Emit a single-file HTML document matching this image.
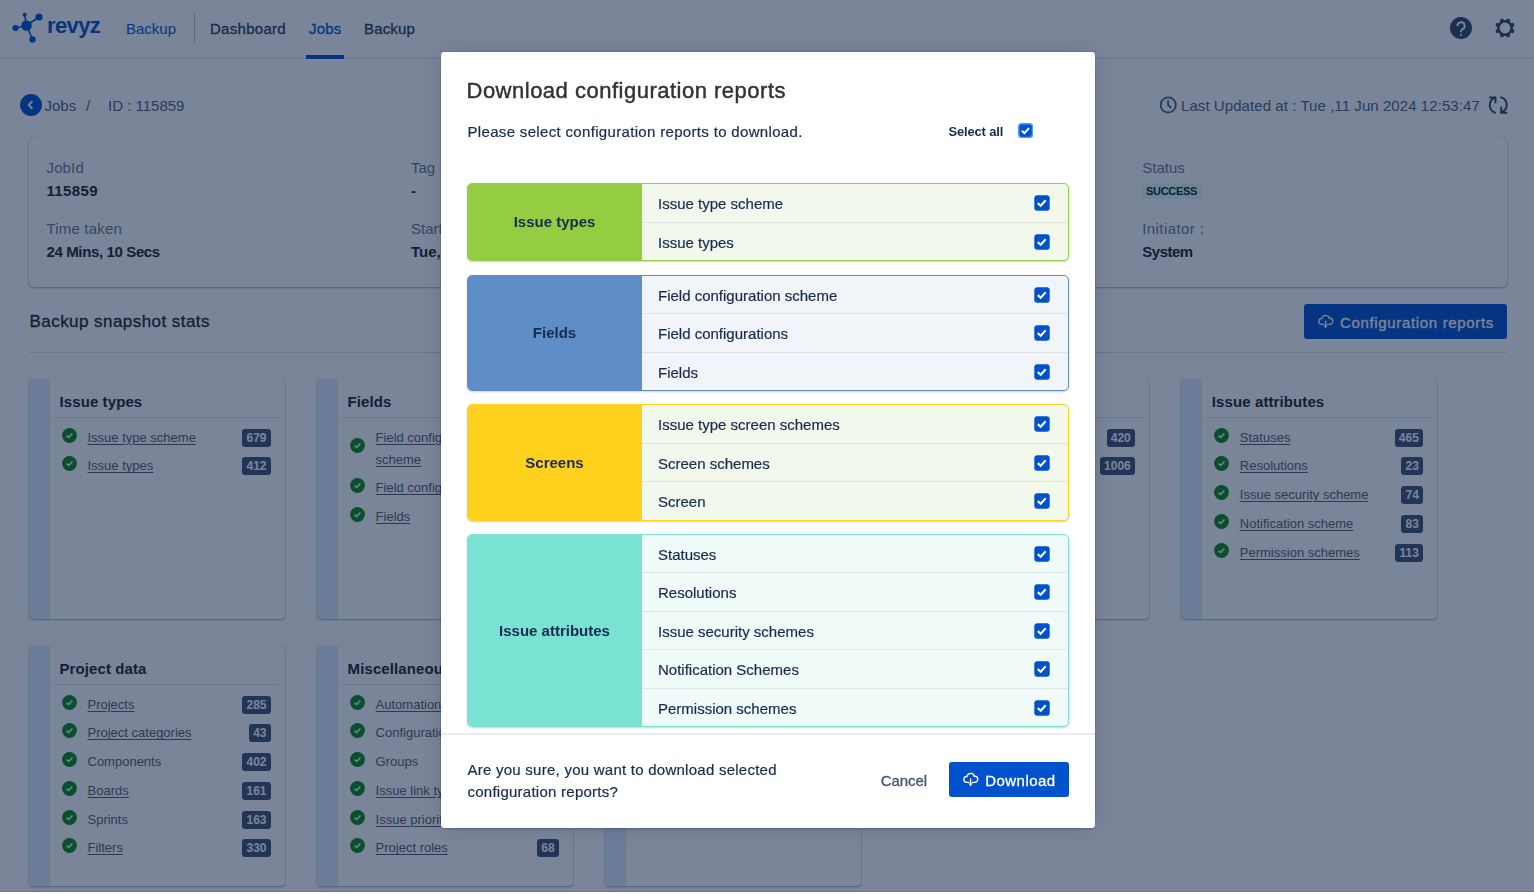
<!DOCTYPE html>
<html><head><meta charset="utf-8">
<style>
*{box-sizing:border-box;margin:0;padding:0}
html,body{width:1534px;height:894px;overflow:hidden;background:#fff;font-family:"Liberation Sans",sans-serif;color:#172B4D}
.t{position:absolute;line-height:1;white-space:nowrap}
.m{-webkit-text-stroke:0.3px currentColor}
.a{position:absolute}
#page{position:absolute;left:0;top:0;width:1534px;height:892px;background:#fff;overflow:hidden}
#nav{position:absolute;left:0;top:0;width:1534px;height:59px;border-bottom:1px solid #DFE1E6;background:#fff}
.card{position:absolute;width:256.5px;height:240.8px;background:#fff;border-radius:4px;box-shadow:0 1px 2px rgba(9,30,66,.35),0 0 1px rgba(9,30,66,.4);overflow:hidden}
.card .stripe{position:absolute;left:0;top:0;width:21px;height:100%;background:#DEEBFF}
.card .ttl{position:absolute;left:31px;top:15px;font-size:15px;font-weight:700;letter-spacing:0.1px;line-height:1;white-space:nowrap;color:#222}
.card .hr{position:absolute;left:25px;right:6px;top:38px;height:1px;background:#DFE1E6}
.it{position:absolute;left:0;width:257px;height:20px}
.it .ck{position:absolute;left:33.2px;top:0;width:15px;height:15px}
.it .tx{position:absolute;left:59px;top:3px;font-size:13px;line-height:1;white-space:nowrap;color:#5b5b5f}
.it .tx.u{text-decoration:underline;text-underline-offset:1.8px;text-decoration-thickness:1px}
.it .bd{position:absolute;right:15px;top:0px;height:18px;padding:0 4px;border-radius:3px;background:#42526E;color:#fff;font-size:12px;font-weight:700;line-height:18px}
#overlay{position:absolute;left:0;top:0;width:1534px;height:892px;background:rgba(9,30,66,.54)}
#modal{will-change:transform;position:absolute;left:441px;top:52px;width:654px;height:776px;background:#fff;border-radius:3px;box-shadow:0 0 0 1px rgba(9,30,66,.08),0 2px 1px rgba(9,30,66,.08),0 0 20px -6px rgba(9,30,66,.31)}
.sec{position:absolute;left:26px;width:602px;border-radius:5px;overflow:hidden;border:1px solid;box-shadow:0 1px 2px rgba(9,30,66,.2)}
.sec .lab{position:absolute;left:-1px;top:-1px;bottom:-1px;width:175px;display:flex;align-items:center;justify-content:center;font-size:15px;font-weight:700;color:#172B4D}
.sec .rows{position:absolute;left:174px;top:0;right:0;bottom:0}
.row{position:absolute;left:0;right:0;border-top:1px solid rgba(9,30,66,.08)}
.row:first-child{border-top:none}
.row .tx{position:absolute;left:16px;font-size:15px;line-height:1;white-space:nowrap;color:#172B4D;-webkit-text-stroke:0.2px #172B4D}
.row .cb{position:absolute;left:392px;width:16px;height:16px}
</style></head><body>
<div id="page">
 <div id="nav">
  <svg class="a" style="left:10px;top:11px" width="36" height="35" viewBox="0 0 36 35">
   <g fill="#0052CC" stroke="#0052CC" stroke-width="1.6">
    <line x1="16.5" y1="14.5" x2="14.7" y2="3.8"/><line x1="16.5" y1="14.5" x2="29" y2="6"/>
    <line x1="16.5" y1="14.5" x2="5.5" y2="17"/><line x1="16.5" y1="14.5" x2="22.5" y2="28.5"/>
   </g>
   <g fill="#0052CC">
    <circle cx="16.5" cy="14.5" r="5.3"/><circle cx="14.7" cy="3.8" r="2"/><circle cx="29" cy="6" r="3.6"/>
    <circle cx="5.5" cy="17" r="3.1"/><circle cx="22.5" cy="28.5" r="3.2"/>
   </g>
  </svg>
  <div class="t" style="left:47px;top:15.3px;font-size:22px;font-weight:700;color:#0052CC;letter-spacing:-0.6px">revyz</div>
  <div class="t" style="left:126px;top:21.3px;font-size:15px;color:#0052CC">Backup</div>
  <div class="a" style="left:194px;top:13px;width:1px;height:30px;background:#C1C7D0"></div>
  <div class="t m" style="left:210px;top:21.3px;font-size:15px;color:#253858;letter-spacing:0.29px">Dashboard</div>
  <div class="t m" style="left:309px;top:21.3px;font-size:15px;color:#0052CC;letter-spacing:0.23px">Jobs</div>
  <div class="t m" style="left:364px;top:21.3px;font-size:15px;color:#253858;letter-spacing:0.16px">Backup</div>
  <div class="a" style="left:306px;top:55px;width:38px;height:4px;background:#0052CC"></div>
  <svg class="a" style="left:1450px;top:17px" width="22" height="22" viewBox="0 0 22 22">
   <circle cx="11" cy="11" r="11" fill="#344563"/>
   <path d="M7.5 9.2 A3.6 3.6 0 1 1 12.3 12.3 Q11 12.9 11 14.2 V15.3" fill="none" stroke="#fff" stroke-width="1.8"/>
   <rect x="10.1" y="16.9" width="1.8" height="1.8" fill="#fff"/>
  </svg>
  <svg class="a" style="left:1494.6px;top:17.5px" width="20" height="20" viewBox="-10 -10 20 20">
   <g fill="#344563"><circle cx="0" cy="0" r="6.65" fill="none" stroke="#344563" stroke-width="2.5"/><rect x="-1.9" y="-9.7" width="3.8" height="3.6" rx="0.9" transform="rotate(22.5)"/><rect x="-1.9" y="-9.7" width="3.8" height="3.6" rx="0.9" transform="rotate(67.5)"/><rect x="-1.9" y="-9.7" width="3.8" height="3.6" rx="0.9" transform="rotate(112.5)"/><rect x="-1.9" y="-9.7" width="3.8" height="3.6" rx="0.9" transform="rotate(157.5)"/><rect x="-1.9" y="-9.7" width="3.8" height="3.6" rx="0.9" transform="rotate(202.5)"/><rect x="-1.9" y="-9.7" width="3.8" height="3.6" rx="0.9" transform="rotate(247.5)"/><rect x="-1.9" y="-9.7" width="3.8" height="3.6" rx="0.9" transform="rotate(292.5)"/><rect x="-1.9" y="-9.7" width="3.8" height="3.6" rx="0.9" transform="rotate(337.5)"/></g>
  </svg>
 </div>

 <!-- breadcrumb -->
 <svg class="a" style="left:20px;top:94px" width="22" height="22" viewBox="0 0 22 22">
  <circle cx="11" cy="11" r="11" fill="#0052CC"/>
  <path d="M12.4 7.2 L8.8 11 L12.4 14.8" fill="none" stroke="#fff" stroke-width="1.9"/>
 </svg>
 <div class="t" style="left:44.5px;top:98.3px;font-size:15px;color:#505F79">Jobs</div>
 <div class="t" style="left:86px;top:98.3px;font-size:15px;color:#505F79">/</div>
 <div class="t" style="left:108px;top:98.3px;font-size:15px;color:#505F79">ID : 115859</div>
 <svg class="a" style="left:1159px;top:96px" width="18" height="18" viewBox="0 0 18 18">
  <circle cx="9.2" cy="8.9" r="7.6" fill="none" stroke="#505F79" stroke-width="1.8"/>
  <path d="M9.1 4.6 V8.9 L11.7 11.7" fill="none" stroke="#505F79" stroke-width="1.8" stroke-linecap="round"/>
 </svg>
 <div class="t" style="left:1181px;top:98.3px;font-size:15px;color:#505F79;letter-spacing:0.07px">Last Updated at : Tue ,11 Jun 2024 12:53:47</div>
 <svg class="a" style="left:1484px;top:92px" width="28" height="26" viewBox="0 0 28 26">
  <g fill="none" stroke="#344563" stroke-width="2" stroke-linecap="round" stroke-linejoin="round">
   <path d="M11 20.6 A7.9 7.9 0 0 1 10.8 5.8"/>
   <path d="M6 5.4 H11.5 V10.4"/>
   <path d="M17.2 5.4 A7.9 7.9 0 0 1 17.3 20.4"/>
   <path d="M17.2 15.6 V20.8 H22.4"/>
  </g>
 </svg>

 <!-- job card -->
 <div class="a" style="left:28.5px;top:137.5px;width:1478.5px;height:149px;background:#fff;border-radius:5px;box-shadow:0 1px 2px rgba(9,30,66,.35),0 0 1px rgba(9,30,66,.4)"></div>
 <div class="t" style="left:46.5px;top:160.1px;font-size:15px;color:#6B778C;letter-spacing:0.14px">JobId</div>
 <div class="t" style="left:46.5px;top:182.9px;font-size:15px;font-weight:700;color:#222;letter-spacing:0.36px">115859</div>
 <div class="t" style="left:46.5px;top:220.9px;font-size:15px;color:#6B778C;letter-spacing:0.18px">Time taken</div>
 <div class="t" style="left:46.5px;top:244.1px;font-size:15px;font-weight:700;color:#222;letter-spacing:-0.37px">24 Mins, 10 Secs</div>
 <div class="t" style="left:411px;top:160.1px;font-size:15px;color:#6B778C">Tag</div>
 <div class="t" style="left:411px;top:182.9px;font-size:15px;font-weight:700;color:#222">-</div>
 <div class="t" style="left:411px;top:220.9px;font-size:15px;color:#6B778C">Started at</div>
 <div class="t" style="left:411px;top:244.1px;font-size:15px;font-weight:700;color:#222">Tue, 11 Jun 2024 12:29:37</div>
 <div class="t" style="left:1142.3px;top:160.1px;font-size:15px;color:#6B778C">Status</div>
 <div class="a" style="left:1142.3px;top:183.3px;width:60.6px;height:16px;border-radius:3px;background:#E3FCEF"></div>
 <div class="t" style="left:1146px;top:186.3px;font-size:11px;font-weight:700;color:#091E42;letter-spacing:-0.3px">SUCCESS</div>
 <div class="t" style="left:1142.3px;top:220.9px;font-size:15px;color:#6B778C;letter-spacing:0.4px">Initiator :</div>
 <div class="t" style="left:1142.3px;top:244.1px;font-size:15px;font-weight:700;color:#222;letter-spacing:-0.5px">System</div>

 <!-- section header -->
 <div class="t m" style="left:29.5px;top:313.4px;font-size:17px;color:#222;letter-spacing:0.45px">Backup snapshot stats</div>
 <div class="a" style="left:1304px;top:304px;width:203px;height:35px;border-radius:3px;background:#0052CC"></div>
 <svg class="a" style="left:1313px;top:310px" width="26" height="24" viewBox="0 0 26 24"><g fill="none" stroke="#fff" stroke-width="1.3"><path d="M11.3 14.3 H8.6 A2.9 2.9 0 0 1 8.9 8.5 A3.8 3.8 0 0 1 16.3 8.3 A3 3 0 0 1 17.2 14.3 H14"/><path d="M12.6 10.5 V16"/></g><path d="M10.5 15.3 H14.7 L12.6 18.5 Z" fill="#fff"/></svg>
 <div class="t m" style="left:1340px;top:315.3px;font-size:15px;color:#fff;letter-spacing:0.66px">Configuration reports</div>
 <div class="a" style="left:28.5px;top:352px;width:1478.5px;height:1px;background:#DFE1E6"></div>

 <div id="cards"><div class="card" style="left:28.5px;top:378.5px"><div class="stripe"></div><div class="ttl">Issue types</div><div class="hr"></div><div class="it" style="top:50px;height:22px"><svg class="ck" style="top:-1px" viewBox="0 0 15 15"><circle cx="7.5" cy="7.5" r="7.4" fill="#0a8a14"/><path d="M4.6 7.6 L6.6 9.5 L10.4 5.6" fill="none" stroke="#fff" stroke-width="1.5"/></svg><div class="tx u" style="line-height:22px;top:-2px;white-space:normal;width:150px">Issue type scheme</div><div class="bd" style="right:15px">679</div></div><div class="it" style="top:78.75px;height:22px"><svg class="ck" style="top:-1px" viewBox="0 0 15 15"><circle cx="7.5" cy="7.5" r="7.4" fill="#0a8a14"/><path d="M4.6 7.6 L6.6 9.5 L10.4 5.6" fill="none" stroke="#fff" stroke-width="1.5"/></svg><div class="tx u" style="line-height:22px;top:-2px;white-space:normal;width:150px">Issue types</div><div class="bd" style="right:15px">412</div></div></div><div class="card" style="left:316.58px;top:378.5px"><div class="stripe"></div><div class="ttl">Fields</div><div class="hr"></div><div class="it" style="top:50px;height:44px"><svg class="ck" style="top:9px" viewBox="0 0 15 15"><circle cx="7.5" cy="7.5" r="7.4" fill="#0a8a14"/><path d="M4.6 7.6 L6.6 9.5 L10.4 5.6" fill="none" stroke="#fff" stroke-width="1.5"/></svg><div class="tx u" style="line-height:22px;top:-2px;white-space:normal;width:150px">Field configuration scheme</div><div class="bd" style="right:15px">420</div></div><div class="it" style="top:100.75px;height:22px"><svg class="ck" style="top:-1px" viewBox="0 0 15 15"><circle cx="7.5" cy="7.5" r="7.4" fill="#0a8a14"/><path d="M4.6 7.6 L6.6 9.5 L10.4 5.6" fill="none" stroke="#fff" stroke-width="1.5"/></svg><div class="tx u" style="line-height:22px;top:-2px;white-space:normal;width:150px">Field configurations</div><div class="bd" style="right:15px">1006</div></div><div class="it" style="top:129.5px;height:22px"><svg class="ck" style="top:-1px" viewBox="0 0 15 15"><circle cx="7.5" cy="7.5" r="7.4" fill="#0a8a14"/><path d="M4.6 7.6 L6.6 9.5 L10.4 5.6" fill="none" stroke="#fff" stroke-width="1.5"/></svg><div class="tx u" style="line-height:22px;top:-2px;white-space:normal;width:150px">Fields</div><div class="bd" style="right:15px">1</div></div></div><div class="card" style="left:604.66px;top:378.5px"><div class="stripe"></div><div class="ttl">Screens</div><div class="hr"></div><div class="it" style="top:50px;height:22px"><svg class="ck" style="top:-1px" viewBox="0 0 15 15"><circle cx="7.5" cy="7.5" r="7.4" fill="#0a8a14"/><path d="M4.6 7.6 L6.6 9.5 L10.4 5.6" fill="none" stroke="#fff" stroke-width="1.5"/></svg><div class="tx u" style="line-height:22px;top:-2px;white-space:normal;width:150px">Issue type screen schemes</div><div class="bd" style="right:15px">1</div></div><div class="it" style="top:78.75px;height:22px"><svg class="ck" style="top:-1px" viewBox="0 0 15 15"><circle cx="7.5" cy="7.5" r="7.4" fill="#0a8a14"/><path d="M4.6 7.6 L6.6 9.5 L10.4 5.6" fill="none" stroke="#fff" stroke-width="1.5"/></svg><div class="tx u" style="line-height:22px;top:-2px;white-space:normal;width:150px">Screen schemes</div><div class="bd" style="right:15px">1</div></div><div class="it" style="top:107.5px;height:22px"><svg class="ck" style="top:-1px" viewBox="0 0 15 15"><circle cx="7.5" cy="7.5" r="7.4" fill="#0a8a14"/><path d="M4.6 7.6 L6.6 9.5 L10.4 5.6" fill="none" stroke="#fff" stroke-width="1.5"/></svg><div class="tx u" style="line-height:22px;top:-2px;white-space:normal;width:150px">Screens</div><div class="bd" style="right:15px">1</div></div></div><div class="card" style="left:892.74px;top:378.5px"><div class="stripe"></div><div class="ttl">Workflows</div><div class="hr"></div><div class="it" style="top:50px;height:22px"><svg class="ck" style="top:-1px" viewBox="0 0 15 15"><circle cx="7.5" cy="7.5" r="7.4" fill="#0a8a14"/><path d="M4.6 7.6 L6.6 9.5 L10.4 5.6" fill="none" stroke="#fff" stroke-width="1.5"/></svg><div class="tx u" style="line-height:22px;top:-2px;white-space:normal;width:150px">Workflow schemes</div><div class="bd" style="right:15px">420</div></div><div class="it" style="top:78.75px;height:22px"><svg class="ck" style="top:-1px" viewBox="0 0 15 15"><circle cx="7.5" cy="7.5" r="7.4" fill="#0a8a14"/><path d="M4.6 7.6 L6.6 9.5 L10.4 5.6" fill="none" stroke="#fff" stroke-width="1.5"/></svg><div class="tx u" style="line-height:22px;top:-2px;white-space:normal;width:150px">Workflows</div><div class="bd" style="right:15px">1006</div></div></div><div class="card" style="left:1180.82px;top:378.5px"><div class="stripe"></div><div class="ttl">Issue attributes</div><div class="hr"></div><div class="it" style="top:50px;height:22px"><svg class="ck" style="top:-1px" viewBox="0 0 15 15"><circle cx="7.5" cy="7.5" r="7.4" fill="#0a8a14"/><path d="M4.6 7.6 L6.6 9.5 L10.4 5.6" fill="none" stroke="#fff" stroke-width="1.5"/></svg><div class="tx u" style="line-height:22px;top:-2px;white-space:normal;width:150px">Statuses</div><div class="bd" style="right:15px">465</div></div><div class="it" style="top:78.75px;height:22px"><svg class="ck" style="top:-1px" viewBox="0 0 15 15"><circle cx="7.5" cy="7.5" r="7.4" fill="#0a8a14"/><path d="M4.6 7.6 L6.6 9.5 L10.4 5.6" fill="none" stroke="#fff" stroke-width="1.5"/></svg><div class="tx u" style="line-height:22px;top:-2px;white-space:normal;width:150px">Resolutions</div><div class="bd" style="right:15px">23</div></div><div class="it" style="top:107.5px;height:22px"><svg class="ck" style="top:-1px" viewBox="0 0 15 15"><circle cx="7.5" cy="7.5" r="7.4" fill="#0a8a14"/><path d="M4.6 7.6 L6.6 9.5 L10.4 5.6" fill="none" stroke="#fff" stroke-width="1.5"/></svg><div class="tx u" style="line-height:22px;top:-2px;white-space:normal;width:150px">Issue security scheme</div><div class="bd" style="right:15px">74</div></div><div class="it" style="top:136.25px;height:22px"><svg class="ck" style="top:-1px" viewBox="0 0 15 15"><circle cx="7.5" cy="7.5" r="7.4" fill="#0a8a14"/><path d="M4.6 7.6 L6.6 9.5 L10.4 5.6" fill="none" stroke="#fff" stroke-width="1.5"/></svg><div class="tx u" style="line-height:22px;top:-2px;white-space:normal;width:150px">Notification scheme</div><div class="bd" style="right:15px">83</div></div><div class="it" style="top:165.0px;height:22px"><svg class="ck" style="top:-1px" viewBox="0 0 15 15"><circle cx="7.5" cy="7.5" r="7.4" fill="#0a8a14"/><path d="M4.6 7.6 L6.6 9.5 L10.4 5.6" fill="none" stroke="#fff" stroke-width="1.5"/></svg><div class="tx u" style="line-height:22px;top:-2px;white-space:normal;width:150px">Permission schemes</div><div class="bd" style="right:15px">113</div></div></div><div class="card" style="left:28.5px;top:645.5px"><div class="stripe"></div><div class="ttl">Project data</div><div class="hr"></div><div class="it" style="top:50px;height:22px"><svg class="ck" style="top:-1px" viewBox="0 0 15 15"><circle cx="7.5" cy="7.5" r="7.4" fill="#0a8a14"/><path d="M4.6 7.6 L6.6 9.5 L10.4 5.6" fill="none" stroke="#fff" stroke-width="1.5"/></svg><div class="tx u" style="line-height:22px;top:-2px;white-space:normal;width:150px">Projects</div><div class="bd" style="right:15px">285</div></div><div class="it" style="top:78.75px;height:22px"><svg class="ck" style="top:-1px" viewBox="0 0 15 15"><circle cx="7.5" cy="7.5" r="7.4" fill="#0a8a14"/><path d="M4.6 7.6 L6.6 9.5 L10.4 5.6" fill="none" stroke="#fff" stroke-width="1.5"/></svg><div class="tx u" style="line-height:22px;top:-2px;white-space:normal;width:150px">Project categories</div><div class="bd" style="right:15px">43</div></div><div class="it" style="top:107.5px;height:22px"><svg class="ck" style="top:-1px" viewBox="0 0 15 15"><circle cx="7.5" cy="7.5" r="7.4" fill="#0a8a14"/><path d="M4.6 7.6 L6.6 9.5 L10.4 5.6" fill="none" stroke="#fff" stroke-width="1.5"/></svg><div class="tx" style="line-height:22px;top:-2px;white-space:normal;width:150px">Components</div><div class="bd" style="right:15px">402</div></div><div class="it" style="top:136.25px;height:22px"><svg class="ck" style="top:-1px" viewBox="0 0 15 15"><circle cx="7.5" cy="7.5" r="7.4" fill="#0a8a14"/><path d="M4.6 7.6 L6.6 9.5 L10.4 5.6" fill="none" stroke="#fff" stroke-width="1.5"/></svg><div class="tx u" style="line-height:22px;top:-2px;white-space:normal;width:150px">Boards</div><div class="bd" style="right:15px">161</div></div><div class="it" style="top:165.0px;height:22px"><svg class="ck" style="top:-1px" viewBox="0 0 15 15"><circle cx="7.5" cy="7.5" r="7.4" fill="#0a8a14"/><path d="M4.6 7.6 L6.6 9.5 L10.4 5.6" fill="none" stroke="#fff" stroke-width="1.5"/></svg><div class="tx" style="line-height:22px;top:-2px;white-space:normal;width:150px">Sprints</div><div class="bd" style="right:15px">163</div></div><div class="it" style="top:193.75px;height:22px"><svg class="ck" style="top:-1px" viewBox="0 0 15 15"><circle cx="7.5" cy="7.5" r="7.4" fill="#0a8a14"/><path d="M4.6 7.6 L6.6 9.5 L10.4 5.6" fill="none" stroke="#fff" stroke-width="1.5"/></svg><div class="tx u" style="line-height:22px;top:-2px;white-space:normal;width:150px">Filters</div><div class="bd" style="right:15px">330</div></div></div><div class="card" style="left:316.58px;top:645.5px"><div class="stripe"></div><div class="ttl">Miscellaneous</div><div class="hr"></div><div class="it" style="top:50px;height:22px"><svg class="ck" style="top:-1px" viewBox="0 0 15 15"><circle cx="7.5" cy="7.5" r="7.4" fill="#0a8a14"/><path d="M4.6 7.6 L6.6 9.5 L10.4 5.6" fill="none" stroke="#fff" stroke-width="1.5"/></svg><div class="tx u" style="line-height:22px;top:-2px;white-space:normal;width:150px">Automation rules</div></div><div class="it" style="top:78.75px;height:22px"><svg class="ck" style="top:-1px" viewBox="0 0 15 15"><circle cx="7.5" cy="7.5" r="7.4" fill="#0a8a14"/><path d="M4.6 7.6 L6.6 9.5 L10.4 5.6" fill="none" stroke="#fff" stroke-width="1.5"/></svg><div class="tx" style="line-height:22px;top:-2px;white-space:normal;width:150px">Configuration</div></div><div class="it" style="top:107.5px;height:22px"><svg class="ck" style="top:-1px" viewBox="0 0 15 15"><circle cx="7.5" cy="7.5" r="7.4" fill="#0a8a14"/><path d="M4.6 7.6 L6.6 9.5 L10.4 5.6" fill="none" stroke="#fff" stroke-width="1.5"/></svg><div class="tx" style="line-height:22px;top:-2px;white-space:normal;width:150px">Groups</div></div><div class="it" style="top:136.25px;height:22px"><svg class="ck" style="top:-1px" viewBox="0 0 15 15"><circle cx="7.5" cy="7.5" r="7.4" fill="#0a8a14"/><path d="M4.6 7.6 L6.6 9.5 L10.4 5.6" fill="none" stroke="#fff" stroke-width="1.5"/></svg><div class="tx u" style="line-height:22px;top:-2px;white-space:normal;width:150px">Issue link types</div></div><div class="it" style="top:165.0px;height:22px"><svg class="ck" style="top:-1px" viewBox="0 0 15 15"><circle cx="7.5" cy="7.5" r="7.4" fill="#0a8a14"/><path d="M4.6 7.6 L6.6 9.5 L10.4 5.6" fill="none" stroke="#fff" stroke-width="1.5"/></svg><div class="tx u" style="line-height:22px;top:-2px;white-space:normal;width:150px">Issue priorities</div></div><div class="it" style="top:193.75px;height:22px"><svg class="ck" style="top:-1px" viewBox="0 0 15 15"><circle cx="7.5" cy="7.5" r="7.4" fill="#0a8a14"/><path d="M4.6 7.6 L6.6 9.5 L10.4 5.6" fill="none" stroke="#fff" stroke-width="1.5"/></svg><div class="tx u" style="line-height:22px;top:-2px;white-space:normal;width:150px">Project roles</div><div class="bd" style="right:15px">68</div></div></div><div class="card" style="left:604.66px;top:645.5px"><div class="stripe"></div></div></div>
</div>
<div id="overlay"></div>
<div class="a" style="left:0;top:891px;width:1534px;height:1px;background:rgba(9,30,66,.12)"></div>
<div id="modal"><div class="t m" style="left:25.5px;top:27.6px;font-size:22px;color:#333;letter-spacing:0.5px;-webkit-text-stroke:0.45px #333">Download configuration reports</div><div class="t" style="left:26.5px;top:72.3px;font-size:15px;color:#172B4D;letter-spacing:0.33px;-webkit-text-stroke:0.2px #172B4D">Please select configuration reports to download.</div><div class="t" style="left:507.4px;top:72.7px;font-size:13px;font-weight:700;color:#172B4D;letter-spacing:-0.16px">Select all</div><svg class="a" style="left:576.5px;top:71.3px" width="15.2" height="15.2" viewBox="0 0 16 16"><rect x="0.8" y="0.8" width="14.4" height="14.4" rx="3" fill="#0052CC" stroke="#4C9AFF" stroke-width="1.6"/><path d="M4 8.1 L6.8 10.6 L11.6 5.4" fill="none" stroke="#fff" stroke-width="2"/></svg><div class="sec" style="top:131px;height:77.5px;border-color:#94CC42;background:#F3F8EC"><div class="lab" style="background:#94CC42">Issue types</div><div class="rows"><div class="row" style="top:-1px;height:39px"><div class="tx" style="top:13.0px">Issue type scheme</div><svg class="cb" style="top:12.4px" viewBox="0 0 16 16"><rect x="0.3" y="0.3" width="15.4" height="15.4" rx="3" fill="#0052CC"/><path d="M3.8 8.1 L6.7 10.7 L11.7 5.3" fill="none" stroke="#fff" stroke-width="2.1"/></svg></div><div class="row" style="top:38px;height:38.5px"><div class="tx" style="top:12.0px">Issue types</div><svg class="cb" style="top:11.4px" viewBox="0 0 16 16"><rect x="0.3" y="0.3" width="15.4" height="15.4" rx="3" fill="#0052CC"/><path d="M3.8 8.1 L6.7 10.7 L11.7 5.3" fill="none" stroke="#fff" stroke-width="2.1"/></svg></div></div></div><div class="sec" style="top:223px;height:115.5px;border-color:#5F8DC6;background:#F1F4F8"><div class="lab" style="background:#5F8DC6">Fields</div><div class="rows"><div class="row" style="top:-1px;height:38px"><div class="tx" style="top:13.0px">Field configuration scheme</div><svg class="cb" style="top:12.4px" viewBox="0 0 16 16"><rect x="0.3" y="0.3" width="15.4" height="15.4" rx="3" fill="#0052CC"/><path d="M3.8 8.1 L6.7 10.7 L11.7 5.3" fill="none" stroke="#fff" stroke-width="2.1"/></svg></div><div class="row" style="top:37px;height:39px"><div class="tx" style="top:12.0px">Field configurations</div><svg class="cb" style="top:11.4px" viewBox="0 0 16 16"><rect x="0.3" y="0.3" width="15.4" height="15.4" rx="3" fill="#0052CC"/><path d="M3.8 8.1 L6.7 10.7 L11.7 5.3" fill="none" stroke="#fff" stroke-width="2.1"/></svg></div><div class="row" style="top:76px;height:38.5px"><div class="tx" style="top:12.0px">Fields</div><svg class="cb" style="top:11.4px" viewBox="0 0 16 16"><rect x="0.3" y="0.3" width="15.4" height="15.4" rx="3" fill="#0052CC"/><path d="M3.8 8.1 L6.7 10.7 L11.7 5.3" fill="none" stroke="#fff" stroke-width="2.1"/></svg></div></div></div><div class="sec" style="top:352px;height:117px;border-color:#FFD11C;background:#F3F8EC"><div class="lab" style="background:#FFD11C">Screens</div><div class="rows"><div class="row" style="top:-1px;height:39px"><div class="tx" style="top:13.0px">Issue type screen schemes</div><svg class="cb" style="top:12.4px" viewBox="0 0 16 16"><rect x="0.3" y="0.3" width="15.4" height="15.4" rx="3" fill="#0052CC"/><path d="M3.8 8.1 L6.7 10.7 L11.7 5.3" fill="none" stroke="#fff" stroke-width="2.1"/></svg></div><div class="row" style="top:38px;height:38px"><div class="tx" style="top:12.0px">Screen schemes</div><svg class="cb" style="top:11.4px" viewBox="0 0 16 16"><rect x="0.3" y="0.3" width="15.4" height="15.4" rx="3" fill="#0052CC"/><path d="M3.8 8.1 L6.7 10.7 L11.7 5.3" fill="none" stroke="#fff" stroke-width="2.1"/></svg></div><div class="row" style="top:76px;height:40px"><div class="tx" style="top:12.0px">Screen</div><svg class="cb" style="top:11.4px" viewBox="0 0 16 16"><rect x="0.3" y="0.3" width="15.4" height="15.4" rx="3" fill="#0052CC"/><path d="M3.8 8.1 L6.7 10.7 L11.7 5.3" fill="none" stroke="#fff" stroke-width="2.1"/></svg></div></div></div><div class="sec" style="top:482px;height:192.5px;border-color:#79E2D2;background:#F0FAF9"><div class="lab" style="background:#79E2D2">Issue attributes</div><div class="rows"><div class="row" style="top:-1px;height:38px"><div class="tx" style="top:13.0px">Statuses</div><svg class="cb" style="top:12.4px" viewBox="0 0 16 16"><rect x="0.3" y="0.3" width="15.4" height="15.4" rx="3" fill="#0052CC"/><path d="M3.8 8.1 L6.7 10.7 L11.7 5.3" fill="none" stroke="#fff" stroke-width="2.1"/></svg></div><div class="row" style="top:37px;height:39px"><div class="tx" style="top:12.0px">Resolutions</div><svg class="cb" style="top:11.4px" viewBox="0 0 16 16"><rect x="0.3" y="0.3" width="15.4" height="15.4" rx="3" fill="#0052CC"/><path d="M3.8 8.1 L6.7 10.7 L11.7 5.3" fill="none" stroke="#fff" stroke-width="2.1"/></svg></div><div class="row" style="top:76px;height:38px"><div class="tx" style="top:12.0px">Issue security schemes</div><svg class="cb" style="top:11.4px" viewBox="0 0 16 16"><rect x="0.3" y="0.3" width="15.4" height="15.4" rx="3" fill="#0052CC"/><path d="M3.8 8.1 L6.7 10.7 L11.7 5.3" fill="none" stroke="#fff" stroke-width="2.1"/></svg></div><div class="row" style="top:114px;height:39px"><div class="tx" style="top:12.0px">Notification Schemes</div><svg class="cb" style="top:11.4px" viewBox="0 0 16 16"><rect x="0.3" y="0.3" width="15.4" height="15.4" rx="3" fill="#0052CC"/><path d="M3.8 8.1 L6.7 10.7 L11.7 5.3" fill="none" stroke="#fff" stroke-width="2.1"/></svg></div><div class="row" style="top:153px;height:38.5px"><div class="tx" style="top:12.0px">Permission schemes</div><svg class="cb" style="top:11.4px" viewBox="0 0 16 16"><rect x="0.3" y="0.3" width="15.4" height="15.4" rx="3" fill="#0052CC"/><path d="M3.8 8.1 L6.7 10.7 L11.7 5.3" fill="none" stroke="#fff" stroke-width="2.1"/></svg></div></div></div><div class="a" style="left:0;top:681px;width:654px;height:2px;background:#EBECF0"></div><div class="a" style="left:26.5px;top:706.8px;font-size:15px;line-height:22px;color:#172B4D;letter-spacing:0.25px;width:340px;-webkit-text-stroke:0.2px #172B4D">Are you sure, you want to download selected configuration reports?</div><div class="t m" style="left:439.8px;top:721.3px;font-size:15px;color:#42526E;letter-spacing:-0.08px">Cancel</div><div class="a" style="left:508.2px;top:710.2px;width:119.7px;height:34.6px;border-radius:3px;background:#0052CC"></div><svg class="a" style="left:517px;top:716px" width="26" height="24" viewBox="0 0 26 24"><g fill="none" stroke="#fff" stroke-width="1.3"><path d="M11.3 14.3 H8.6 A2.9 2.9 0 0 1 8.9 8.5 A3.8 3.8 0 0 1 16.3 8.3 A3 3 0 0 1 17.2 14.3 H14"/><path d="M12.6 10.5 V16"/></g><path d="M10.5 15.3 H14.7 L12.6 18.5 Z" fill="#fff"/></svg><div class="t m" style="left:544.2px;top:720.8px;font-size:15px;color:#fff;letter-spacing:0.46px">Download</div></div>
</body></html>
